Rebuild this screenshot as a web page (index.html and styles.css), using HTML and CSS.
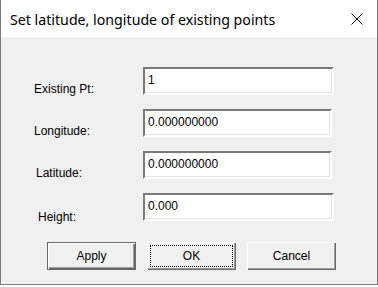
FILE: index.html
```html
<!DOCTYPE html>
<html>
<head>
    <meta charset="UTF-8">
    <title>Set latitude, longitude of existing points</title>
    <link rel="stylesheet" href="styles.css">
</head>
<body>
    <div class="window">
        <div class="titlebar">
            <span class="title">Set latitude, longitude of existing points</span>
            <button class="close-btn" aria-label="Close">
                <svg width="12" height="12" viewBox="0 0 12 12">
                    <path d="M0.5 0.5 L11.5 11.5 M11.5 0.5 L0.5 11.5" stroke="#000" stroke-width="1" fill="none"/>
                </svg>
            </button>
        </div>

        <div class="client">
            <div class="form">
                <div class="row">
                    <label class="label">Existing Pt:</label>
                    <input class="field" type="text" value="1">
                </div>
                <div class="row">
                    <label class="label">Longitude:</label>
                    <input class="field narrow" type="text" value="0.000000000">
                </div>
                <div class="row">
                    <label class="label shift-1">Latitude:</label>
                    <input class="field narrow" type="text" value="0.000000000">
                </div>
                <div class="row">
                    <label class="label shift-2">Height:</label>
                    <input class="field" type="text" value="0.000">
                </div>
            </div>

            <div class="buttons">
                <button class="btn default-btn">Apply</button>
                <button class="btn focus-btn">OK</button>
                <button class="btn">Cancel</button>
            </div>
        </div>
    </div>
</body>
</html>
```

FILE: styles.css
```css
* {
    margin: 0;
    padding: 0;
    box-sizing: border-box;
}

html, body {
    background: #ffffff;
}

body {
    font-family: "Liberation Sans", Arial, sans-serif;
    font-size: 12px;
    color: #000;
}

.window {
    width: 378px;
    height: 285px;
    border: 1px solid #7a7a7a;
    border-top: none;
    background: #f0f0f0;
    display: flex;
    flex-direction: column;
}

.titlebar {
    height: 37px;
    background: #ffffff;
    display: flex;
    align-items: center;
    padding-left: 9px;
    padding-right: 14px;
}

.title {
    flex: 1;
    font-family: "Noto Sans", "Open Sans", sans-serif;
    font-size: 14.2px;
    color: #000;
    padding-top: 1px;
}

.close-btn {
    width: 12px;
    height: 12px;
    border: none;
    background: none;
    display: flex;
    margin-top: 1px;
}

.client {
    flex: 1;
    padding-top: 31px;
}

.form {
    display: flex;
    flex-direction: column;
    gap: 15px;
}

.row {
    display: flex;
    align-items: flex-end;
    height: 27px;
}

.label {
    flex: none;
    width: 142px;
    padding-left: 33px;
    line-height: 14px;
    margin-bottom: -1px;
}

.label.shift-1 {
    padding-left: 35px;
    margin-bottom: -1px;
}

.label.shift-2 {
    padding-left: 37px;
    margin-bottom: -3px;
}

.field {
    flex: none;
    width: 191px;
    height: 28px;
    font-family: "Liberation Sans", Arial, sans-serif;
    font-size: 12px;
    color: #000;
    background: #ffffff;
    border: 2px solid;
    border-color: #7a7a7a #ffffff #ffffff #7a7a7a;
    box-shadow: inset -1px -1px 0 #e3e3e3;
    padding: 0 4px 3px 3px;
    outline: none;
}

.field.narrow {
    width: 189px;
}

.buttons {
    display: flex;
    gap: 11px;
    padding-left: 46px;
    margin-top: 21px;
}

.btn {
    width: 89px;
    height: 28px;
    font-family: "Liberation Sans", Arial, sans-serif;
    font-size: 12px;
    color: #000;
    background: #f0f0f0;
    border: none;
    box-shadow: inset 1px 1px 0 #ffffff, inset -1px -1px 0 #696969, inset -2px -2px 0 #a0a0a0;
}

.default-btn {
    border: 1px solid #6a6a6a;
}

.focus-btn {
    outline: 1px dotted #000;
    outline-offset: -4px;
}
```
